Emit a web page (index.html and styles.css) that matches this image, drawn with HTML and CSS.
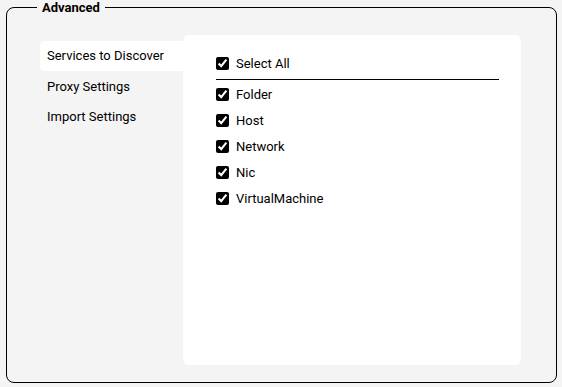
FILE: index.html
```html
<!DOCTYPE html>
<html>
<head>
<meta charset="utf-8">
<link rel="stylesheet" href="styles.css">
</head>
<body>
<fieldset class="group">
  <legend class="group-title">Advanced</legend>
  <div class="layout">
    <nav class="tabs">
      <div class="tab active">Services to Discover</div>
      <div class="tab">Proxy Settings</div>
      <div class="tab">Import Settings</div>
    </nav>
    <section class="panel">
      <label class="row"><input type="checkbox" checked><span>Select All</span></label>
      <div class="divider"></div>
      <label class="row"><input type="checkbox" checked><span>Folder</span></label>
      <label class="row"><input type="checkbox" checked><span>Host</span></label>
      <label class="row"><input type="checkbox" checked><span>Network</span></label>
      <label class="row"><input type="checkbox" checked><span>Nic</span></label>
      <label class="row"><input type="checkbox" checked><span>VirtualMachine</span></label>
    </section>
  </div>
</fieldset>
</body>
</html>
```

FILE: styles.css
```css
html, body {
  margin: 0;
  padding: 0;
  background: #f4f4f4;
}
body {
  font-family: Roboto, "Liberation Sans", sans-serif;
  font-size: 13px;
  color: #000;
}
.group {
  box-sizing: border-box;
  margin: 0 5px 0 6px;
  height: 383px;
  padding: 0;
  border: 1px solid #000;
  border-radius: 8px;
}
.group-title {
  margin-left: 30px;
  padding: 0 5px;
  font-weight: 700;
  font-size: 13px;
  line-height: 15px;
}
.layout {
  display: flex;
  margin-top: 20px;
  padding-left: 33px;
}
.tabs {
  width: 143px;
  margin-top: 6px;
  display: flex;
  flex-direction: column;
}
.tab {
  height: 30px;
  line-height: 30px;
  padding-left: 7px;
  margin-bottom: 0.5px;
}
.tab.active {
  background: #fff;
  border-radius: 5px 0 0 5px;
}
.panel {
  box-sizing: border-box;
  width: 338px;
  height: 330px;
  background: #fff;
  border-radius: 6px;
  padding: 15px 22px 0 33px;
}
.row {
  display: flex;
  align-items: center;
  gap: 7px;
  height: 26px;
}
.row input {
  margin: 0;
  width: 13px;
  height: 13px;
  accent-color: #000;
}
.divider {
  height: 1px;
  background: #000;
  margin: 3px 0 1px;
}
```
